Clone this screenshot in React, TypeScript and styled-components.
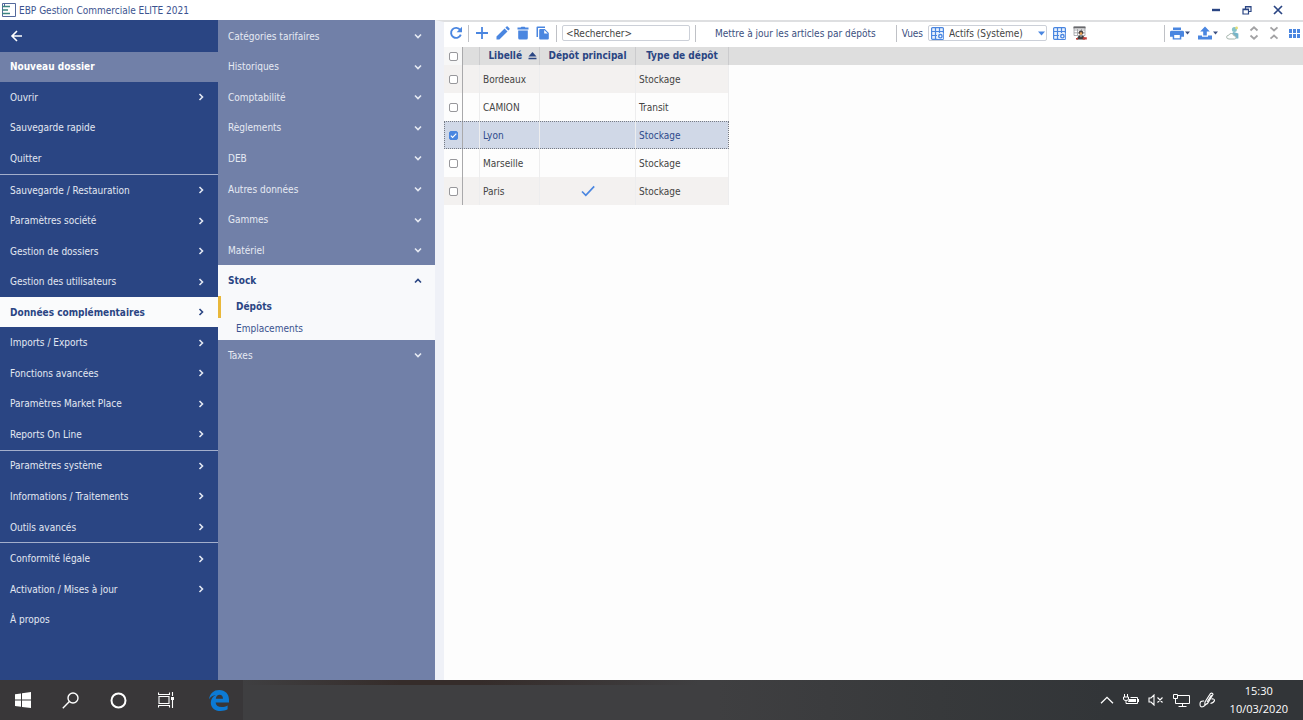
import React, { useState } from 'react';
import styled, { createGlobalStyle, css } from 'styled-components';

const FONT = '"DejaVu Sans Condensed", Tahoma, sans-serif';
const ROW = 'clamp(28px, calc((100vh - 109px) / 20), 36px)';
const NAVY = '#2a4583';
const SLATE = '#7180a8';
const BLUE = '#4a86e0';

const Global = createGlobalStyle`
  *, *::before, *::after { box-sizing: border-box; }
  body { margin: 0; background: #fdfdfd; font-family: ${FONT}; font-size: 10px; color: #444; }
  button, input, select { font: inherit; color: inherit; }
  button { border: 0; padding: 0; margin: 0; background: none; cursor: pointer; }
  ul { list-style: none; margin: 0; padding: 0; }
  svg { display: block; flex: none; }
`;

const Shell = styled.div`
  display: flex;
  flex-direction: column;
  min-height: 100vh;
`;

const TitleBar = styled.header`
  display: flex;
  align-items: center;
  height: 20px;
  padding: 0 20px 0 2px;
  background: #fff;
  color: #3b538f;
`;

const AppTitle = styled.h1`
  flex: 1;
  margin: 0 0 0 3px;
  font-size: 10px;
  font-weight: 400;
`;

const WindowControls = styled.div`
  display: flex;
  gap: 21px;
`;

const WindowButton = styled.button`
  display: block;
  width: 10px;
  height: 12px;
`;

const Body = styled.div`
  flex: 1;
  display: flex;
  min-width: 0;
`;

const MainNav = styled.nav`
  flex: 0 0 218px;
  padding-top: 1px;
  background: ${NAVY};
  color: #e3e8f2;
`;

const NavGroup = styled.ul`
  & + & { border-top: 1px solid #a3aecb; }
`;

const NavItem = styled.button<{ $tone?: 'current' | 'folder' }>`
  display: flex;
  align-items: center;
  justify-content: space-between;
  width: 100%;
  height: ${ROW};
  padding: 0 13px 0 10px;
  text-align: left;
  ${({ $tone }) => $tone === 'folder' && css`
    background: ${SLATE};
    color: #fff;
    font-weight: 700;
  `}
  ${({ $tone }) => $tone === 'current' && css`
    background: #fafbfc;
    color: ${NAVY};
    font-weight: 700;
  `}
`;

const SubNav = styled.nav`
  flex: 0 0 217px;
  padding-top: 1px;
  background: ${SLATE};
  color: #e6eaf3;
`;

const SubHeader = styled.button<{ $open?: boolean }>`
  display: flex;
  align-items: center;
  justify-content: space-between;
  width: 100%;
  height: ${ROW};
  padding: 0 13px 0 10px;
  text-align: left;
  ${({ $open }) => $open && css`
    background: #f8f9fb;
    color: ${NAVY};
    font-weight: 700;
  `}
`;

const SubList = styled.ul`
  background: #f8f9fb;
  color: #3b538f;
`;

const SubLink = styled.a<{ $active?: boolean }>`
  display: flex;
  align-items: center;
  height: 22px;
  padding-left: 15px;
  border-left: 3px solid ${({ $active }) => ($active ? '#e9b83b' : 'transparent')};
  color: ${({ $active }) => ($active ? NAVY : 'inherit')};
  font-weight: ${({ $active }) => ($active ? 700 : 400)};
  text-decoration: none;
`;

const Content = styled.main`
  flex: 1;
  min-width: 0;
  border-left: 9px solid #eff1f7;
  border-top: 2px solid #dedfe1;
`;

const Toolbar = styled.div`
  display: flex;
  align-items: center;
  height: 25px;
  padding: 0 3px 3px 5px;
  background: #fff;
  color: #3b4f80;
  white-space: nowrap;
`;

const Tools = styled.div<{ $gap: number }>`
  display: flex;
  align-items: center;
  gap: ${({ $gap }) => $gap}px;
`;

const ToolButton = styled.button`
  display: flex;
  align-items: center;
  gap: 1px;
`;

const TextButton = styled.button`
  margin: 0 20px 0 19px;
`;

const Divider = styled.span<{ $before?: number; $after?: number }>`
  width: 1px;
  height: 17px;
  margin: 0 ${({ $after = 5 }) => $after}px 0 ${({ $before = 5 }) => $before}px;
  background: #bfc1c6;
`;

const Search = styled.input`
  width: 128px;
  height: 16px;
  padding: 0 3px;
  border: 1px solid #ccd0d8;
  border-radius: 2px;
  background: #fff;
  color: #444;
  &::placeholder { color: #444; opacity: 1; }
`;

const ViewLabel = styled.label`
  margin-right: 5px;
`;

const ViewBox = styled.div`
  display: flex;
  align-items: center;
  height: 16px;
  width: 119px;
  padding: 0 1px 0 2px;
  margin-right: 6px;
  border: 1px solid #ccd0d8;
  border-radius: 2px;
`;

const ViewSelect = styled.select`
  flex: 1;
  min-width: 0;
  height: 14px;
  padding: 0 0 0 5px;
  border: 0;
  appearance: none;
  background: transparent;
  color: #444;
`;

const Spacer = styled.div`
  flex: 1;
`;

const GridArea = styled.div`
  background: linear-gradient(#dedede 18px, #fdfdfd 18px);
`;

const Grid = styled.table`
  width: 285px;
  table-layout: fixed;
  border-collapse: separate;
  border-spacing: 0;
`;

const HeadCell = styled.th<{ $plain?: boolean }>`
  height: 18px;
  padding: 0 2px;
  background: ${({ $plain }) => ($plain ? '#f7f7f7' : '#dedede')};
  border-right: 1px solid ${({ $plain }) => ($plain ? '#a9a9ab' : '#cbcbcd')};
  color: ${NAVY};
  font-weight: 700;
  text-align: center;
  white-space: nowrap;
  line-height: 16px;
`;

const SortLabel = styled.span`
  display: flex;
  align-items: center;
  justify-content: flex-end;
  gap: 6px;
`;

const Cell = styled.td<{ $edge?: boolean }>`
  height: 28px;
  padding: 0 3px;
  border-right: 1px solid ${({ $edge }) => ($edge ? '#a9a9ab' : '#ededee')};
  > svg { margin: 0 auto; }
`;

const Line = styled.tr<{ $selected: boolean }>`
  background: #fdfdfd;
  &:nth-child(4n + 1) { background: #f3f1f0; }
  ${({ $selected }) => $selected && css`
    && { background: #d0d8e7; color: #2e4a8c; }
    outline: 1px dotted #777b84;
    outline-offset: -1px;
  `}
`;

const Check = styled.input`
  appearance: none;
  display: block;
  width: 9px;
  height: 9px;
  margin: 0 auto;
  border: 1px solid #97979b;
  border-radius: 2px;
  background: #fff;
`;

const CheckBox = styled.span`
  display: grid;
  justify-content: center;
  align-items: center;
  > * { grid-area: 1 / 1; }
  > svg { pointer-events: none; visibility: hidden; }
  > input:checked { border-color: ${BLUE}; background: ${BLUE}; }
  > input:checked + svg { visibility: visible; }
`;

const Taskbar = styled.footer`
  display: flex;
  align-items: center;
  justify-content: space-between;
  height: 40px;
  padding: 0 15px 0 14px;
  background:
    linear-gradient(90deg, transparent 243px, #352c2a 400px, #352c2a 480px, transparent 700px) top / 100% 5px no-repeat,
    linear-gradient(90deg, #393739 243px, #3f3f41 243px, #3f3f41 55%, #37393b 72%, #323538 85%);
  color: #fff;
`;

const Tray = styled.div`
  display: flex;
  align-items: center;
  gap: 9px;
`;

const Clock = styled.time`
  margin-left: 5px;
  font-family: "Open Sans", "Noto Sans", sans-serif;
  font-size: 11px;
  line-height: 18px;
  text-align: center;
`;

const Chevron = ({ dir }: { dir: 'right' | 'down' | 'up' }) => (
  <svg width="8" height="8" viewBox="0 0 8 8" fill="none" stroke="currentColor" strokeWidth="1.6">
    <path d={{ right: 'M2.5 1 L5.5 4 L2.5 7', down: 'M1 2.5 L4 5.5 L7 2.5', up: 'M1 5.5 L4 2.5 L7 5.5' }[dir]} />
  </svg>
);

const Caret = () => (
  <svg width="5" height="4" viewBox="0 0 5 4" fill="#3b4f80"><path d="M0 .5H5L2.5 3.5Z" /></svg>
);

const Tick = () => (
  <svg width="9" height="9" viewBox="0 0 9 9" fill="none" stroke="#fff" strokeWidth="1.1"><path d="M1.8 4.7L3.6 6.5L7.3 2.6" /></svg>
);

const Icon = ({ name }: { name: string }) => {
  switch (name) {
    case 'refresh':
      return (
        <svg width="14" height="14" viewBox="0 0 14 14">
          <path d="M11.2 4 A5 5 0 1 0 11.8 8.6" fill="none" stroke={BLUE} strokeWidth="1.9" />
          <path d="M13 .8V6.2H7.6Z" fill={BLUE} />
        </svg>
      );
    case 'add':
      return <svg width="14" height="14" viewBox="0 0 14 14" stroke={BLUE} strokeWidth="1.8"><path d="M7 1V13M1 7H13" /></svg>;
    case 'edit':
      return (
        <svg width="14" height="14" viewBox="0 0 14 14" fill={BLUE}>
          <path d="M.5 13.5V10.6L8.6 2.5L11.5 5.4L3.4 13.5ZM9.4 1.7L10.5.6Q11.1 0 11.7.6L13.4 2.3Q14 2.9 13.4 3.5L12.3 4.6Z" />
        </svg>
      );
    case 'delete':
      return <svg width="12" height="14" viewBox="0 0 12 14" fill={BLUE}><path d="M.5 1.6H3.6L4.4.7H7.6L8.4 1.6H11.5V3.4H.5ZM1.2 4.4H10.8V12Q10.8 13.5 9.3 13.5H2.7Q1.2 13.5 1.2 12Z" /></svg>;
    case 'copy':
      return (
        <svg width="13" height="14" viewBox="0 0 13 14" fill={BLUE}>
          <path d="M.5 1.5Q.5.5 1.5.5H9V2H2V11H.5Z" />
          <path d="M4.2 3H8.8L12.8 7V12.5Q12.8 13.5 11.8 13.5H4.2Q3.2 13.5 3.2 12.5V4Q3.2 3 4.2 3ZM8.2 4V7.6H11.8Z" fillRule="evenodd" />
        </svg>
      );
    case 'view':
      return (
        <svg width="13" height="13" viewBox="0 0 13 13">
          <rect x=".6" y=".6" width="11.8" height="11.8" rx="1" fill="#e8f1fd" stroke={BLUE} strokeWidth="1.2" />
          <path d="M4.5 1V12M8.5 1V6M1 4.5H12M1 8.5H6" stroke={BLUE} strokeWidth="1.2" />
          <rect x="6.2" y="6" width="6" height="6" fill="#e8f1fd" />
          <circle cx="9.4" cy="9.2" r="1.7" fill="#fff" stroke={BLUE} strokeWidth="1.4" />
        </svg>
      );
    case 'report':
      return (
        <svg width="14" height="14" viewBox="0 0 14 14">
          <path d="M1 1H12V9.5H1ZM1 4H12M1 6.8H12M4.5 3V9M8.5 3V9" fill="#fff" stroke="#9b9da1" strokeWidth=".8" />
          <path d="M.5 .5H12.5V2.4H.5Z" fill="#68696c" />
          <path d="M5.6 7.4Q5.6 4.6 8 4.6Q10.4 4.6 10.4 7.4L9.4 8.6H6.6Z" fill="#4a423f" />
          <circle cx="8" cy="7.6" r="1.3" fill="#eea55a" />
          <path d="M3.5 13.5L5 10.4L7.2 9.2L8 11.4L8.8 9.2L11 10.4L12 13.5Z" fill="#3f3d3e" />
          <path d="M10 11.2H13.8V13.5H9.6ZM3 12H5V13.5H3Z" fill="#c33b36" />
        </svg>
      );
    case 'print':
      return (
        <svg width="14" height="13" viewBox="0 0 14 13" fill={BLUE}>
          <path d="M3 .5H11V3H3Z" />
          <path fillRule="evenodd" d="M1.5 3.8H12.5Q14 3.8 14 5.2V9.8H11.3V12.6H2.7V9.8H0V5.2Q0 3.8 1.5 3.8ZM4.2 8V11.2H9.8V8Z" />
        </svg>
      );
    case 'export':
      return <svg width="14" height="14" viewBox="0 0 14 14" fill={BLUE}><path d="M7 .5L11.8 5.5H8.8V9.5H5.2V5.5H2.2ZM0 9.5H4V10.8H10V9.5H14V13.5H0Z" /></svg>;
    case 'cloud':
      return (
        <svg width="13" height="14" viewBox="0 0 13 14">
          <circle cx="8.4" cy="3.4" r="2.5" fill="#86c3ca" />
          <path d="M5 8L7.6 5.9L12.4 7.6V12.5H7Z" fill="#75b4c9" />
          <circle cx="10.6" cy="2" r="1.4" fill="#e5dd78" />
          <path d="M3 13Q.6 13 .6 11Q.8 9.2 2.8 9.2Q3.5 7.3 5.5 7.5Q7.6 7.7 7.8 9.6Q10.2 9.8 10 11.7Q9.7 13 8.5 13Z" fill="#fff" stroke="#a7b6ae" />
        </svg>
      );
    case 'expand':
      return <svg width="10" height="14" viewBox="0 0 10 14" fill="none" stroke="#a2a2a4" strokeWidth="1.8"><path d="M1.5 4.5L5 1.3L8.5 4.5M1.5 9.5L5 12.7L8.5 9.5" /></svg>;
    case 'collapse':
      return <svg width="10" height="14" viewBox="0 0 10 14" fill="none" stroke="#a2a2a4" strokeWidth="1.8"><path d="M1.5 1.3L5 4.5L8.5 1.3M1.5 12.7L5 9.5L8.5 12.7" /></svg>;
    default:
      return <svg width="11" height="9" viewBox="0 0 11 9" fill={BLUE}><path d="M0 0H3V4H0ZM4 0H7V4H4ZM8 0H11V4H8ZM0 5H3V9H0ZM4 5H7V9H4ZM8 5H11V9H8Z" /></svg>;
  }
};

type Entry = { label: string; leaf?: boolean; tone?: 'current' | 'folder' };

const groups: Entry[][] = [
  [
    { label: 'Nouveau dossier', leaf: true, tone: 'folder' },
    { label: 'Ouvrir' },
    { label: 'Sauvegarde rapide', leaf: true },
    { label: 'Quitter', leaf: true },
  ],
  [
    { label: 'Sauvegarde / Restauration' },
    { label: 'Paramètres société' },
    { label: 'Gestion de dossiers' },
    { label: 'Gestion des utilisateurs' },
    { label: 'Données complémentaires', tone: 'current' },
    { label: 'Imports / Exports' },
    { label: 'Fonctions avancées' },
    { label: 'Paramètres Market Place' },
    { label: 'Reports On Line' },
  ],
  [{ label: 'Paramètres système' }, { label: 'Informations / Traitements' }, { label: 'Outils avancés' }],
  [{ label: 'Conformité légale' }, { label: 'Activation / Mises à jour' }, { label: 'À propos', leaf: true }],
];

const sections = [
  'Catégories tarifaires', 'Historiques', 'Comptabilité', 'Règlements', 'DEB',
  'Autres données', 'Gammes', 'Matériel', 'Stock', 'Taxes',
];

const depots = [
  { name: 'Bordeaux', main: false, kind: 'Stockage' },
  { name: 'CAMION', main: false, kind: 'Transit' },
  { name: 'Lyon', main: false, kind: 'Stockage' },
  { name: 'Marseille', main: false, kind: 'Stockage' },
  { name: 'Paris', main: true, kind: 'Stockage' },
];

export default function App() {
  const [open, setOpen] = useState('Stock');
  const [selected, setSelected] = useState<string[]>(['Lyon']);
  const toggle = (name: string) =>
    setSelected((list) => (list.includes(name) ? list.filter((n) => n !== name) : [...list, name]));

  return (
    <Shell>
      <Global />
      <TitleBar>
        <svg width="14" height="14" viewBox="0 0 14 14" fill="none">
          <path d="M2.5 4V.5H13.5V13.5H.5V.5H3" stroke="#54689c" />
          <path d="M0 3.5H8M0 10.5H8M0 7H6" stroke="#3c8580" strokeWidth="1.6" />
        </svg>
        <AppTitle>EBP Gestion Commerciale ELITE 2021</AppTitle>
        <WindowControls>
          <WindowButton aria-label="Réduire"><svg width="10" height="12" viewBox="0 0 10 12"><path d="M1 6H9" stroke={NAVY} strokeWidth="2.4" /></svg></WindowButton>
          <WindowButton aria-label="Restaurer">
            <svg width="10" height="12" viewBox="0 0 10 12" fill="none" stroke={NAVY} strokeWidth="1.2">
              <path d="M3.5 4.5V2.5H9V7.5H7M3.5 3H9M1 5H6.5V10H1ZM1 5.6H6.5" />
            </svg>
          </WindowButton>
          <WindowButton aria-label="Fermer"><svg width="10" height="12" viewBox="0 0 10 12"><path d="M1 2L9 10M9 2L1 10" stroke={NAVY} strokeWidth="1.7" /></svg></WindowButton>
        </WindowControls>
      </TitleBar>

      <Body>
        <MainNav aria-label="Menu principal">
          <NavItem aria-label="Retour">
            <svg width="13" height="12" viewBox="0 0 13 12" fill="none" stroke="#fff" strokeWidth="1.6"><path d="M7 1L2 6L7 11M2 6H12" /></svg>
          </NavItem>
          {groups.map((group) => (
            <NavGroup key={group[0].label}>
              {group.map((item) => (
                <li key={item.label}>
                  <NavItem $tone={item.tone}>
                    {item.label}
                    {!item.leaf && <Chevron dir="right" />}
                  </NavItem>
                </li>
              ))}
            </NavGroup>
          ))}
        </MainNav>

        <SubNav aria-label="Données complémentaires">
          {sections.map((name) => (
            <React.Fragment key={name}>
              <SubHeader $open={open === name} aria-expanded={open === name} onClick={() => setOpen(name)}>
                {name}
                <Chevron dir={open === name ? 'up' : 'down'} />
              </SubHeader>
              {name === 'Stock' && open === name && (
                <SubList>
                  <li><SubLink href="#depots" $active>Dépôts</SubLink></li>
                  <li><SubLink href="#emplacements">Emplacements</SubLink></li>
                </SubList>
              )}
            </React.Fragment>
          ))}
        </SubNav>

        <Content>
          <Toolbar>
            <ToolButton aria-label="Actualiser"><Icon name="refresh" /></ToolButton>
            <Divider $after={6} />
            <Tools $gap={7}>
              <ToolButton aria-label="Ajouter"><Icon name="add" /></ToolButton>
              <ToolButton aria-label="Modifier"><Icon name="edit" /></ToolButton>
              <ToolButton aria-label="Supprimer"><Icon name="delete" /></ToolButton>
              <ToolButton aria-label="Dupliquer"><Icon name="copy" /></ToolButton>
            </Tools>
            <Divider $before={7} />
            <Search aria-label="Rechercher" placeholder="<Rechercher>" />
            <Divider $after={0} />
            <TextButton>Mettre à jour les articles par dépôts</TextButton>
            <Divider $before={0} />
            <ViewLabel htmlFor="view">Vues</ViewLabel>
            <ViewBox>
              <Icon name="view" />
              <ViewSelect id="view"><option>Actifs (Système)</option></ViewSelect>
              <svg width="7" height="5" viewBox="0 0 7 5" fill={BLUE}><path d="M0 .5H7L3.5 4.5Z" /></svg>
            </ViewBox>
            <Tools $gap={7}>
              <ToolButton aria-label="Configurer la vue"><Icon name="view" /></ToolButton>
              <ToolButton aria-label="Rapport"><Icon name="report" /></ToolButton>
            </Tools>
            <Spacer />
            <Divider />
            <Tools $gap={8}>
              <ToolButton aria-label="Imprimer"><Icon name="print" /><Caret /></ToolButton>
              <ToolButton aria-label="Exporter"><Icon name="export" /><Caret /></ToolButton>
              <Tools $gap={10}>
                <ToolButton aria-label="Services en ligne"><Icon name="cloud" /></ToolButton>
                <ToolButton aria-label="Développer"><Icon name="expand" /></ToolButton>
                <ToolButton aria-label="Réduire tout"><Icon name="collapse" /></ToolButton>
                <ToolButton aria-label="Affichage"><Icon name="tiles" /></ToolButton>
              </Tools>
            </Tools>
          </Toolbar>

          <GridArea>
            <Grid>
              <colgroup>
                <col width="19" /><col width="17" /><col width="60" /><col width="96" /><col width="93" />
              </colgroup>
              <thead>
                <tr>
                  <HeadCell $plain><CheckBox><Check type="checkbox" aria-label="Tout sélectionner" /><Tick /></CheckBox></HeadCell>
                  <HeadCell />
                  <HeadCell>
                    <SortLabel>
                      Libellé
                      <svg width="9" height="8" viewBox="0 0 9 8" fill={NAVY}><path d="M4.5 0L8.5 4.5H.5ZM.5 5.8H8.5V7.2H.5Z" /></svg>
                    </SortLabel>
                  </HeadCell>
                  <HeadCell>Dépôt principal</HeadCell>
                  <HeadCell>Type de dépôt</HeadCell>
                </tr>
              </thead>
              <tbody>
                {depots.map((depot) => (
                  <Line key={depot.name} $selected={selected.includes(depot.name)}>
                    <Cell $edge>
                      <CheckBox>
                        <Check type="checkbox" aria-label={depot.name} checked={selected.includes(depot.name)} onChange={() => toggle(depot.name)} />
                        <Tick />
                      </CheckBox>
                    </Cell>
                    <Cell />
                    <Cell>{depot.name}</Cell>
                    <Cell>
                      {depot.main && (
                        <svg width="14" height="12" viewBox="0 0 14 12" fill="none" stroke={BLUE} strokeWidth="1.7"><path d="M1 6.5L4.8 10.3L13.2 1.4" /></svg>
                      )}
                    </Cell>
                    <Cell>{depot.kind}</Cell>
                  </Line>
                ))}
              </tbody>
            </Grid>
          </GridArea>
        </Content>
      </Body>

      <Taskbar>
        <Tools $gap={31}>
          <ToolButton aria-label="Démarrer">
            <svg width="17" height="16" viewBox="0 0 17 16" fill="#fff"><path d="M1 2.2L7 1.4V7.6H1ZM8 1.2L17 0V7.6H8ZM1 8.5H7V14.7L1 13.9ZM8 8.5H17V16L8 14.9Z" /></svg>
          </ToolButton>
          <ToolButton aria-label="Recherche">
            <svg width="17" height="17" viewBox="0 0 17 17" fill="none" stroke="#fff" strokeWidth="1.4"><circle cx="11" cy="6" r="5" /><path d="M7.4 9.6L.8 16.2" /></svg>
          </ToolButton>
          <ToolButton aria-label="Cortana">
            <svg width="17" height="17" viewBox="0 0 17 17" fill="none" stroke="#fff" strokeWidth="2"><circle cx="8.5" cy="8.5" r="7" /></svg>
          </ToolButton>
          <ToolButton aria-label="Vue des tâches">
            <svg width="17" height="16" viewBox="0 0 17 16" fill="none" stroke="#fff" strokeWidth="1.1">
              <path d="M1 4.5H11V11.5H1ZM.5 .5V2.5H11.5V.5M.5 15.5V13.5H11.5V15.5M14.5 0V4M14.5 8V16" /><path d="M13 5H16V8H13Z" fill="#fff" stroke="none" />
            </svg>
          </ToolButton>
          <ToolButton aria-label="Microsoft Edge">
            <svg width="24" height="21" viewBox="-3 0 24 21" fill="#0c7ad4">
              <path d="M0 9.2C.9 3.4 4.7 0 10.2 0C16.4 0 20 4.3 20 9.6V12.4H6.6C6.9 15.6 9.2 17 12.6 17C14.9 17 16.8 16.4 18.6 15.4V19.3C16.8 20.4 14.3 21 11.6 21C5.6 21 1.8 17.6 1.8 12.7C1.8 9.1 3.8 6.5 6.8 5C4 5.2 1.7 6.7 0 9.2ZM6.8 8.7H14C14 6.2 12.6 4.8 10.6 4.8C8.5 4.8 7.2 6.3 6.8 8.7Z" />
            </svg>
          </ToolButton>
        </Tools>
        <Tray>
          <svg width="14" height="8" viewBox="0 0 14 8" fill="none" stroke="#fff" strokeWidth="1.3"><path d="M1 7.3L7 1.3L13 7.3" /></svg>
          <svg width="16" height="12" viewBox="0 0 16 12" fill="none" stroke="#fff">
            <path d="M1.5 0V3M4.5 0V3M.5 3H5.5V5Q5.5 6.5 3 6.5Q.5 6.5 .5 5ZM3 6.5V9.5H14.5V3.5H7.5M15.5 5V8" /><path d="M6 5H13V8H5Z" fill="#fff" stroke="none" />
          </svg>
          <svg width="16" height="12" viewBox="0 0 16 12" fill="none" stroke="#fff" strokeWidth="1.1"><path d="M1 4H3L6 1V11L3 8H1ZM9.5 3.5L14.5 8.5M14.5 3.5L9.5 8.5" /></svg>
          <svg width="17" height="15" viewBox="0 0 17 15" fill="none" stroke="#fff"><path d="M5 2.5H16.5V10.5H2.5V6M9.5 10.5V13.5M5.5 13.5H13.5M.5 1.5H4.5V5.5H.5Z" /></svg>
          <svg width="17" height="17" viewBox="0 0 17 17" fill="none" stroke="#fff" strokeWidth="1.1">
            <path d="M6 10L11.5 1.5Q13.5 .5 14 2.5L8.5 11.5L5.8 13ZM8 10L12.5 3M5 9Q1 8.5 1 12Q1 16 4.5 14.5L8 11.5M12.5 7Q15.5 6.5 15.5 8.5Q15 10.5 11.5 11.5" />
          </svg>
          <Clock>15:30<br />10/03/2020</Clock>
        </Tray>
      </Taskbar>
    </Shell>
  );
}
